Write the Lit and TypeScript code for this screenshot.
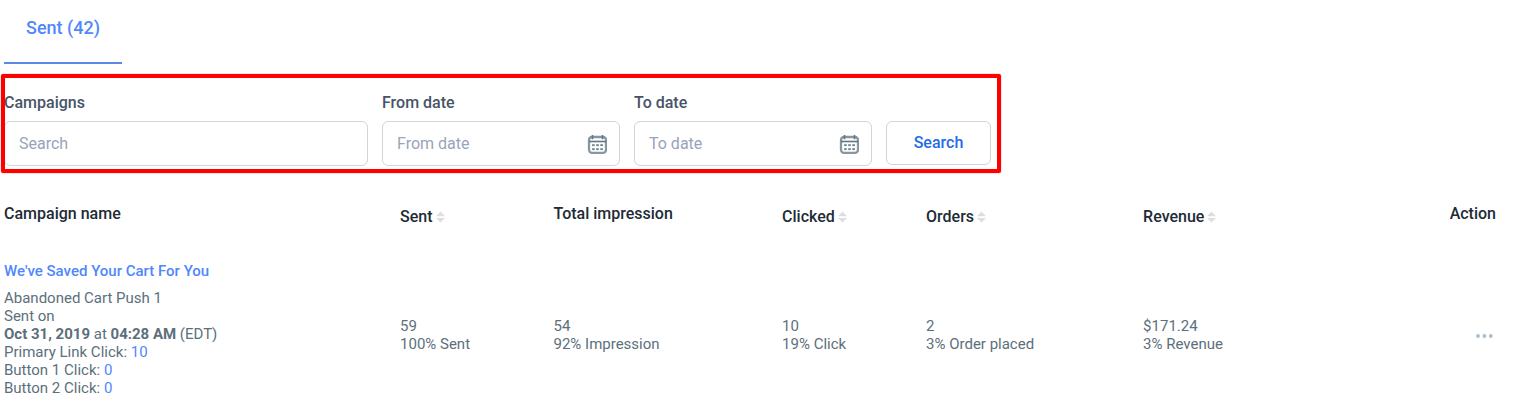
import { LitElement, html, css, svg } from "lit";
import { customElement } from "lit/decorators.js";

interface Column {
  label: string;
  sortable: boolean;
  name: string;
}

const columns: Column[] = [
  { label: "Campaign name", sortable: false, name: "campaign" },
  { label: "Sent", sortable: true, name: "sent" },
  { label: "Total impression", sortable: false, name: "impression" },
  { label: "Clicked", sortable: true, name: "clicked" },
  { label: "Orders", sortable: true, name: "orders" },
  { label: "Revenue", sortable: true, name: "revenue" },
  { label: "Action", sortable: false, name: "action" },
];

const campaigns = [
  {
    title: "We've Saved Your Cart For You",
    type: "Abandoned Cart Push 1",
    date: "Oct 31, 2019",
    time: "04:28 AM",
    zone: "(EDT)",
    clicks: [
      ["Primary Link Click:", "10"],
      ["Button 1 Click:", "0"],
      ["Button 2 Click:", "0"],
    ],
    stats: [
      ["59", "100% Sent"],
      ["54", "92% Impression"],
      ["10", "19% Click"],
      ["2", "3% Order placed"],
      ["$171.24", "3% Revenue"],
    ],
  },
];

const dots = [0, 1, 2, 3, 4, 5];

const calendarIcon = html`<svg width="20" height="20" viewBox="0 0 20 20" fill="none" aria-hidden="true">
  <rect x="2" y="3" width="17" height="15.8" rx="3" stroke="#8797a1" stroke-width="2.3" />
  <path d="M2 7.5h17" stroke="#607682" stroke-width="1.6" />
  <path d="M5.5 1v4.2M15.5 1v4.2" stroke="#607682" stroke-width="1.6" />
  ${dots.map(
    (i) => svg`<rect x=${5.1 + (i % 3) * 4.1} y=${10.2 + Math.floor(i / 3) * 4} width="2.6" height="1.9" fill="#708490" />`
  )}
</svg>`;

const sortIcon = html`<svg width="9" height="12" viewBox="0 0 9 12" fill="#dedede" aria-hidden="true">
  <path d="M4.5 .6 9 5.2H0zM4.5 11.6 0 7h9z" />
</svg>`;

@customElement("app-root")
export class AppRoot extends LitElement {
  static styles = css`
    :host {
      display: block;
      padding: 0 0 8px 4px;
      background: #fff;
      color: #5c6f7c;
      font: 15px/18px Roboto, "Liberation Sans", sans-serif;
    }
    *,
    *::before,
    *::after {
      box-sizing: border-box;
    }
    a {
      color: #5087fb;
      text-decoration: none;
    }
    button,
    input {
      font: inherit;
    }
    button {
      margin: 0;
      padding: 0;
      border: 0;
      background: none;
      color: inherit;
      cursor: pointer;
    }
    .tabs {
      display: flex;
      height: 64px;
    }
    .tab {
      display: flex;
      align-items: center;
      padding: 0 22px 6px;
      border-bottom: 2px solid #5b8ae2;
      font-size: 18px;
      font-weight: 500;
    }
    .filters {
      position: relative;
      display: grid;
      grid-template-columns: minmax(0, 364px) minmax(0, 238px) minmax(0, 238px) 105px;
      gap: 14px;
      align-items: end;
      width: fit-content;
      margin-top: 9px;
      padding: 20px 10px 7px 0;
    }
    .filters::after {
      content: "";
      position: absolute;
      inset: 1px 0 0 -3px;
      border: 4px solid #f00;
      border-radius: 2px;
      box-shadow: 0 0 1px #f00;
      pointer-events: none;
    }
    .label {
      display: block;
      margin-bottom: 8px;
      color: #475467;
      font-size: 16px;
      line-height: 20px;
      font-weight: 500;
    }
    .control {
      display: flex;
      align-items: center;
      height: 45px;
      padding: 0 12px 0 14px;
      border: 1px solid #d2d4dc;
      border-radius: 6px;
      background: #fff;
    }
    .input {
      flex: 1;
      min-width: 0;
      padding: 0;
      border: 0;
      outline: 0;
      background: none;
      color: #475467;
      font-size: 16px;
    }
    .input::placeholder {
      color: #98a4ba;
      opacity: 1;
    }
    .calendar {
      display: flex;
    }
    .search {
      height: 44px;
      margin-bottom: 1px;
      border: 1px solid #d2d4dc;
      border-radius: 6px;
      color: #246be8;
      font-size: 16px;
      font-weight: 500;
    }
    .table {
      width: 100%;
      margin-top: 31px;
      border-collapse: collapse;
      table-layout: fixed;
    }
    .campaign {
      width: 26.14%;
    }
    .sent {
      width: 10.13%;
    }
    .impression {
      width: 15.09%;
    }
    .clicked {
      width: 9.5%;
    }
    .orders {
      width: 14.33%;
    }
    .revenue {
      width: 18%;
    }
    th {
      height: 57px;
      padding: 0;
      color: #212b36;
      font-size: 16px;
      line-height: 20px;
      font-weight: 500;
      text-align: left;
      vertical-align: top;
    }
    .sort {
      display: inline-flex;
      align-items: center;
      gap: 3px;
      padding-top: 3px;
    }
    td {
      padding: 0;
      vertical-align: middle;
    }
    .table .action {
      padding-right: 23px;
      text-align: right;
    }
    .title {
      display: block;
      margin-bottom: 8px;
      line-height: 20px;
      font-weight: 500;
    }
    .details {
      margin: 0 0 12px;
    }
    .line {
      display: block;
    }
    .more {
      padding: 6px 3px 8px;
    }
    .more svg {
      display: block;
    }
  `;

  private dateField(id: string, label: string) {
    return html`<div>
      <label class="label" for=${id}>${label}</label>
      <div class="control">
        <input class="input" id=${id} type="text" placeholder=${label} />
        <button class="calendar" type="button" aria-label="Choose ${label}">${calendarIcon}</button>
      </div>
    </div>`;
  }

  render() {
    return html`
      <nav class="tabs"><a class="tab" href="#sent">Sent (42)</a></nav>
      <form class="filters" @submit=${(e: Event) => e.preventDefault()}>
        <div>
          <label class="label" for="campaigns">Campaigns</label>
          <div class="control"><input class="input" id="campaigns" type="text" placeholder="Search" /></div>
        </div>
        ${this.dateField("from", "From date")} ${this.dateField("to", "To date")}
        <button class="search" type="submit">Search</button>
      </form>
      <table class="table">
        <thead>
          <tr>
            ${columns.map(
              (c) => html`<th class=${c.name} scope="col">
                ${c.sortable ? html`<button class="sort" type="button">${c.label}${sortIcon}</button>` : c.label}
              </th>`
            )}
          </tr>
        </thead>
        <tbody>
          ${campaigns.map(
            (c) => html`<tr>
              <td>
                <a class="title" href="#campaign">${c.title}</a>
                <p class="details">
                  <span class="line">${c.type}</span>
                  <span class="line">Sent on</span>
                  <span class="line"><b>${c.date}</b> at <b>${c.time}</b> ${c.zone}</span>
                  ${c.clicks.map(([label, n]) => html`<span class="line">${label} <a href="#clicks">${n}</a></span>`)}
                </p>
              </td>
              ${c.stats.map(
                ([value, rate]) => html`<td><span class="line">${value}</span><span class="line">${rate}</span></td>`
              )}
              <td class="action">
                <button class="more" type="button" aria-label="More actions">
                  <svg width="17" height="4" viewBox="0 0 17 4" fill="#a9c0cd" aria-hidden="true">
                    <circle cx="2" cy="2" r="1.9" />
                    <circle cx="8.4" cy="2" r="1.9" />
                    <circle cx="14.8" cy="2" r="1.9" />
                  </svg>
                </button>
              </td>
            </tr>`
          )}
        </tbody>
      </table>
    `;
  }
}
